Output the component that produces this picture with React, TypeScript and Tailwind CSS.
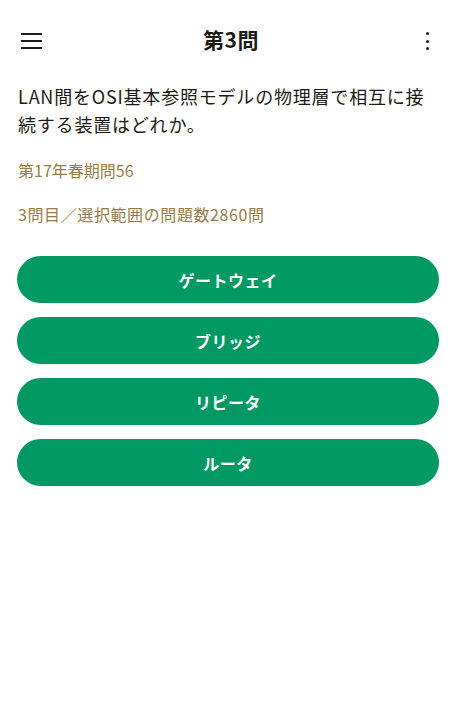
const choices = ["ゲートウェイ", "ブリッジ", "リピータ", "ルータ"];

const App = () => {
  return (
    <div
      className="min-h-screen w-full bg-white text-[#1d1b16]"
      style={{ fontFamily: '"Noto Sans CJK JP", "Noto Sans", sans-serif' }}
    >
      {/* top bar */}
      <div className="flex h-[82px] items-center justify-between pl-[21px] pr-[24px]">
        <button className="flex h-[22px] w-[21px] flex-col justify-between py-[3px]">
          <span className="block h-[2px] w-[21px] bg-[#1d1b16]" />
          <span className="block h-[2px] w-[21px] bg-[#1d1b16]" />
          <span className="block h-[2px] w-[21px] bg-[#1d1b16]" />
        </button>
        <h1 className="pb-[3px] pr-[4px] text-[21px] font-bold leading-none tracking-[0.5px]">第3問</h1>
        <button className="flex h-[22px] w-[8px] flex-col items-center justify-between py-[2px]">
          <span className="block h-[3px] w-[3px] rounded-full bg-[#1d1b16]" />
          <span className="block h-[3px] w-[3px] rounded-full bg-[#1d1b16]" />
          <span className="block h-[3px] w-[3px] rounded-full bg-[#1d1b16]" />
        </button>
      </div>

      <div className="px-[17px]">
        <p className="pl-[1px] text-[18px] leading-[28px] tracking-[0.8px]">
          LAN間をOSI基本参照モデルの物理層で相互に接続する装置はどれか。
        </p>
        <p className="mt-[18px] pl-[1px] text-[16px] leading-[28px] text-[#9a7b45]">
          第17年春期問56
        </p>
        <p className="mt-[16px] pl-[1px] text-[16px] leading-[28px] tracking-[0.6px] text-[#9a7b45]">
          3問目／選択範囲の問題数2860問
        </p>

        <div className="mt-[28px] flex flex-col gap-[14px]">
          {choices.map((c) => (
            <button
              key={c}
              className="flex h-[47px] w-full items-center justify-center rounded-full bg-[#009963] text-[16px] font-bold tracking-[0.5px] text-white"
            >
              {c}
            </button>
          ))}
        </div>
      </div>
    </div>
  );
};

export default App;
